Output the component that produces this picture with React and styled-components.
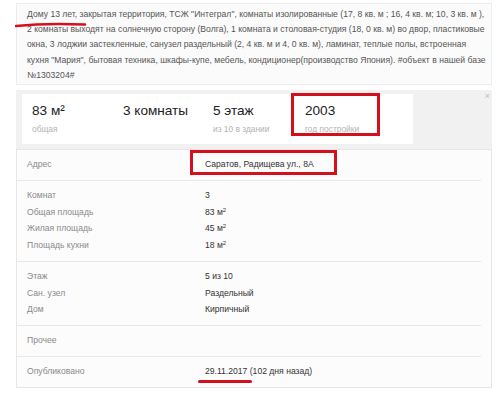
import React from 'react'
import styled, { createGlobalStyle } from 'styled-components'

const Global = createGlobalStyle`
body {
  margin: 0;
  background: #fff;
  font-family: "Liberation Sans", Arial, sans-serif;
}
`;

const Page = styled.div`
width: 500px;
height: 400px;
padding: 3px 8px 0 16px;
box-sizing: border-box;
overflow: hidden;
`;

const Description = styled.div`
position: relative;
background: #fbfbfb;
border: 1px solid #ececec;
padding: 3px 10px 1px 10px;
font-size: 8.6px;
line-height: 15.2px;
color: #555;
white-space: nowrap;
`;

const Scribble = styled.svg`
position: absolute;
left: -2px;
top: 16px;
`;

const StatsPanel = styled.div`
position: relative;
margin-top: 5px;
background: #f1f1f1;
padding: 4px 6px;
height: 51px;
`;

const StatsCard = styled.div`
width: 391px;
height: 50px;
background: #fff;
display: grid;
grid-template-columns: 91px 90px 92px 92px;
padding-left: 10px;
box-sizing: border-box;
`;

const Stat = styled.div`
position: relative;
padding-top: 9px;
`;

const StatValue = styled.div`
font-size: 13.6px;
color: #222;
line-height: 16px;
`;

const StatLabel = styled.div`
font-size: 8.4px;
color: #b3b3b3;
margin-top: 5px;
`;

const Close = styled.span`
position: absolute;
right: 2px;
top: 1px;
font-size: 9px;
color: #bbb;
`;

const MarkBox = styled.div`
position: absolute;
border: 3px solid #d3101c;
left: ${p => p.$left}px;
top: ${p => p.$top}px;
width: ${p => p.$w}px;
height: ${p => p.$h}px;
box-sizing: border-box;
`;

const Details = styled.div`
background: #fcfcfc;
border: 1px solid #e6e6e6;
font-size: 8.6px;
`;

const Section = styled.div`
margin-right: 10px;
padding: 6px 0 7.5px 10px;
border-bottom: ${p => (p.$last ? 'none' : '1px solid #e8e8e8')};
`;

const Row = styled.div`
display: grid;
grid-template-columns: 178px 1fr;
line-height: 16.6px;
height: 16.6px;
`;

const Label = styled.div`
color: #8a8a8a;
`;

const Value = styled.div`
position: relative;
color: #333;
`;

const Sup = styled.span`
font-size: 6px;
line-height: 0;
vertical-align: 3px;
`;

const Underline = styled.div`
position: absolute;
left: -7px;
top: 17px;
width: 54px;
height: 3px;
border-radius: 2px;
background: #d3101c;
`;

const stats = [
  { v: '83 м²', l: 'общая' },
  { v: '3 комнаты', l: '' },
  { v: '5 этаж', l: 'из 10 в здании' },
  { v: '2003', l: 'год постройки', mark: true },
]

const sections = [
  [['Адрес', 'Саратов, Радищева ул., 8А', 'address']],
  [
    ['Комнат', '3'],
    ['Общая площадь', <>83 м<Sup>2</Sup></>],
    ['Жилая площадь', <>45 м<Sup>2</Sup></>],
    ['Площадь кухни', <>18 м<Sup>2</Sup></>],
  ],
  [
    ['Этаж', '5 из 10'],
    ['Сан. узел', 'Раздельный'],
    ['Дом', 'Кирпичный'],
  ],
  [['Прочее', '']],
  [['Опубликовано', '29.11.2017 (102 дня назад)', 'date']],
]

export default function App() {
  return (
    <Page>
      <Global />
      <Description>
        Дому 13 лет, закрытая территория, ТСЖ "Интеграл", комнаты изолированные (17, 8 кв. м ; 16, 4 кв. м; 10, 3 кв. м ),<br />
        2 комнаты выходят на солнечную сторону (Волга), 1 комната и столовая-студия (18, 0 кв. м) во двор, пластиковые<br />
        окна, 3 лоджии застекленные, санузел раздельный (2, 4 кв. м и 4, 0 кв. м), ламинат, теплые полы, встроенная<br />
        кухня "Мария", бытовая техника, шкафы-купе, мебель, кондиционер(производство Япония). #объект в нашей базе<br />
        №1303204#
        <Scribble width="72" height="8" viewBox="0 0 72 8">
          <path d="M1 6 C 20 4, 45 3.5, 70 4.5" stroke="#d3101c" strokeWidth="2.6" fill="none" strokeLinecap="round" />
        </Scribble>
      </Description>
      <StatsPanel>
        <StatsCard>
          {stats.map((s, i) => (
            <Stat key={i}>
              <StatValue>{s.v}</StatValue>
              <StatLabel>{s.l || '\u00a0'}</StatLabel>
              {s.mark && <MarkBox $left={-14} $top={-1} $w={89} $h={43} />}
            </Stat>
          ))}
        </StatsCard>
        <Close>×</Close>
      </StatsPanel>
      <Details>
        {sections.map((rows, i) => (
          <Section key={i} $last={i === sections.length - 1}>
            {rows.map(([l, v, kind]) => (
              <Row key={l}>
                <Label>{l}</Label>
                <Value>
                  {v}
                  {kind === 'address' && <MarkBox $left={-15} $top={-6} $w={147} $h={25} />}
                  {kind === 'date' && <Underline />}
                </Value>
              </Row>
            ))}
          </Section>
        ))}
      </Details>
    </Page>
  )
}
